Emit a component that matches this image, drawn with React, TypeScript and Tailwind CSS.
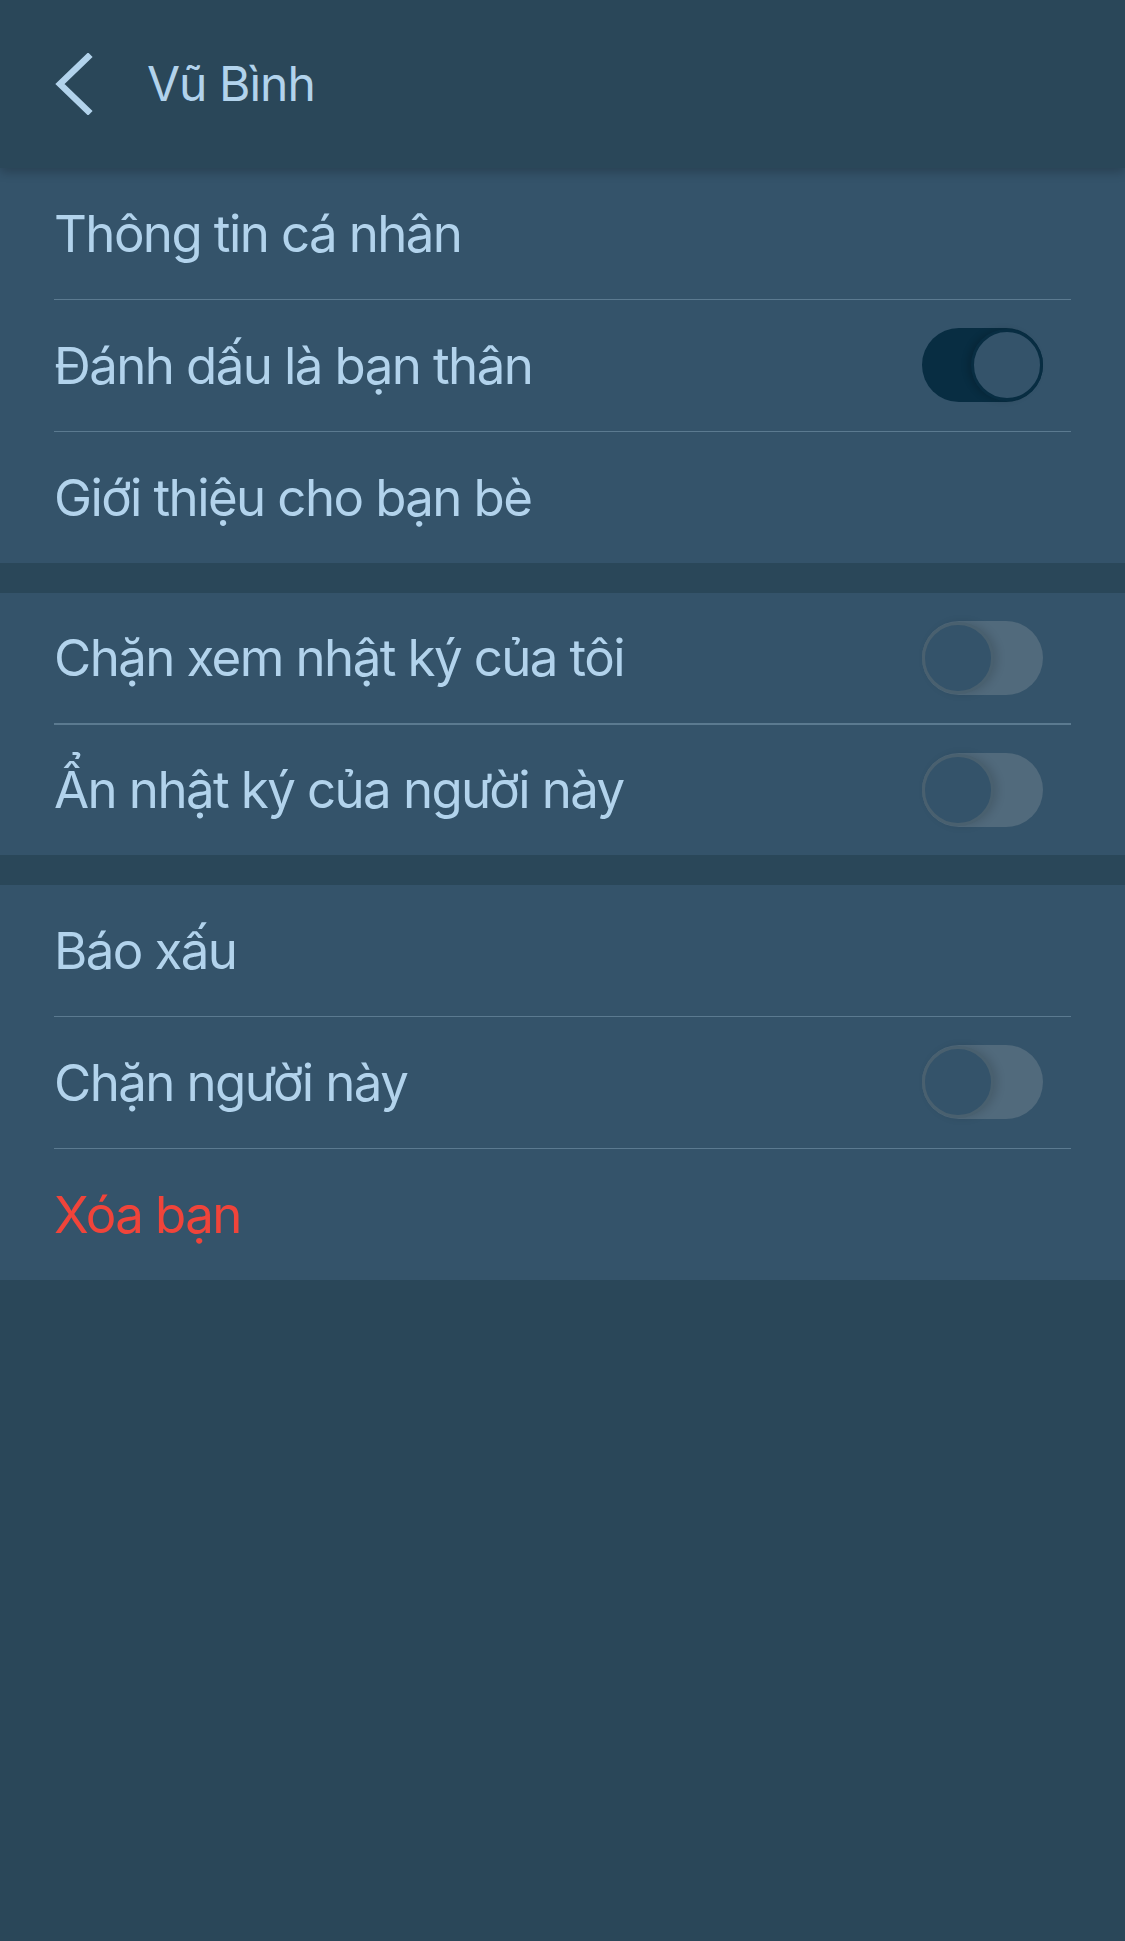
import React from 'react';

type Row = {
  label: string;
  toggle?: boolean;
  on?: boolean;
  danger?: boolean;
};

const groups: Row[][] = [
  [
    { label: 'Thông tin cá nhân' },
    { label: 'Đánh dấu là bạn thân', toggle: true, on: true },
    { label: 'Giới thiệu cho bạn bè' },
  ],
  [
    { label: 'Chặn xem nhật ký của tôi', toggle: true },
    { label: 'Ẩn nhật ký của người này', toggle: true },
  ],
  [
    { label: 'Báo xấu' },
    { label: 'Chặn người này', toggle: true },
    { label: 'Xóa bạn', danger: true },
  ],
];

const Switch = ({ on }: { on?: boolean }) =>
  on ? (
    <div className="flex h-[74px] w-[121px] items-center justify-end rounded-full bg-[#082d42]">
      <div className="h-[72px] w-[72px] rounded-full border-[3px] border-[#082d42] bg-[#34536a] shadow-[-4px_0_6px_rgba(0,0,0,0.15)]" />
    </div>
  ) : (
    <div className="flex h-[74px] w-[121px] items-center justify-start rounded-full bg-[#516a7c]">
      <div className="h-[72px] w-[72px] rounded-full border-[3px] border-[#49606f] bg-[#34536a] shadow-[4px_0_8px_rgba(0,0,0,0.12)]" />
    </div>
  );

export default function App() {
  return (
    <div
      className="min-h-[1941px] w-full bg-[#2a4759] text-[#b2d3ec]"
      style={{ fontFamily: 'Inter, "Noto Sans", sans-serif' }}
    >
      <header className="relative z-10 flex h-[168px] items-center bg-[#2a4759] shadow-[0_4px_10px_rgba(0,0,0,0.22)]">
        <button className="ml-[50px] flex h-[70px] w-[46px] items-center justify-center">
          <svg width="42" height="62" viewBox="0 0 42 62" fill="none">
            <path d="M36 4 L8 31 L36 58" stroke="#b2d3ec" strokeWidth="6.5" strokeLinecap="square" />
          </svg>
        </button>
        <h1 className="ml-[51px] text-[48px] font-normal tracking-[-1px]">Vũ Bình</h1>
      </header>

      <main className="flex flex-col gap-[30px]">
        {groups.map((rows, gi) => (
          <section key={gi} className="bg-[#34536a]">
            {rows.map((row, ri) => (
              <div key={ri}>
                <div className="flex h-[130.5px] items-center justify-between pl-[54px] pr-[82px]">
                  <span
                    className={`text-[51px] leading-none tracking-[-1.6px] ${
                      row.danger ? 'text-[#f0443a]' : 'text-[#b2d3ec]'
                    }`}
                  >
                    {row.label}
                  </span>
                  {row.toggle && <Switch on={row.on} />}
                </div>
                {ri < rows.length - 1 && <div className="mx-[54px] h-[1.5px] bg-[#5b7a90]" />}
              </div>
            ))}
          </section>
        ))}
      </main>
    </div>
  );
}
